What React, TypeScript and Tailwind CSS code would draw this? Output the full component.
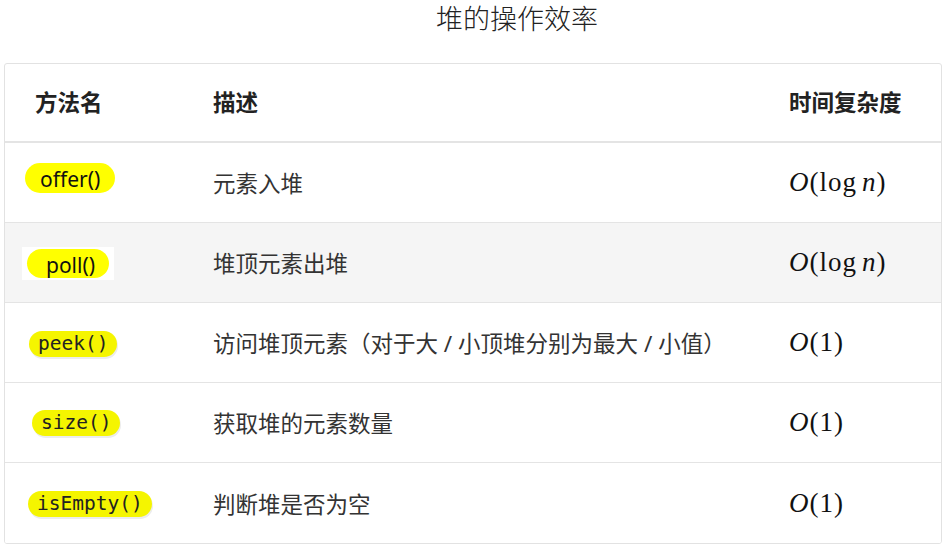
const sans = "font-['Noto_Sans','Noto_Sans_CJK_SC',sans-serif]";
const mono = "font-['DejaVu_Sans_Mono','Noto_Sans_CJK_SC',monospace]";

type Row = {
  name: string;
  kind: 'sans' | 'sans-boxed' | 'mono';
  desc: string;
  cost: 'log' | 'one';
  shift: string;
  striped?: boolean;
};

const rows: Row[] = [
  { name: 'offer()', kind: 'sans', desc: '元素入堆', cost: 'log', shift: 'ml-[0px] mb-[9px]' },
  { name: 'poll()', kind: 'sans-boxed', desc: '堆顶元素出堆', cost: 'log', shift: '-ml-[3px] mt-[2px]', striped: true },
  { name: 'peek()', kind: 'mono', desc: '访问堆顶元素（对于大 / 小顶堆分别为最大 / 小值）', cost: 'one', shift: 'ml-[4px] mt-[2px]' },
  { name: 'size()', kind: 'mono', desc: '获取堆的元素数量', cost: 'one', shift: 'ml-[7px] mt-[1px]' },
  { name: 'isEmpty()', kind: 'mono', desc: '判断堆是否为空', cost: 'one', shift: 'ml-[3px] mt-[1px]' },
];

function Method({ row }: { row: Row }) {
  if (row.kind === 'sans') {
    return (
      <span className={`inline-flex h-[30px] items-center rounded-full bg-[#ffff00] px-[15px] pt-[4px] text-[21px] text-[#111] ${sans}`}>
        {row.name}
      </span>
    );
  }
  if (row.kind === 'sans-boxed') {
    return (
      <span className="inline-flex bg-white px-[5px] py-[2px]">
        <span className={`inline-flex h-[29px] items-center rounded-full bg-[#ffff00] pl-[19px] pr-[14px] pt-[5px] text-[21px] text-[#111] ${sans}`}>
          {row.name}
        </span>
      </span>
    );
  }
  return (
    <span className={`inline-flex h-[26px] items-center rounded-full bg-[#f5f500] px-[9px] text-[19.5px] text-[#222] shadow-[1px_2px_0_#ececec] ${mono}`}>
      {row.name}
    </span>
  );
}

function Cost({ kind }: { kind: 'log' | 'one' }) {
  return (
    <span className="font-['Liberation_Serif',serif] text-[27px] tracking-[1px] text-[#111]">
      <i>O</i>(
      {kind === 'log' ? (
        <>
          log<span className="ml-[5px] italic">n</span>
        </>
      ) : (
        '1'
      )}
      )
    </span>
  );
}

export default function App() {
  return (
    <div className={`min-h-[549px] w-[952px] bg-white ${sans}`}>
      <h2 className="flex h-[38px] items-center justify-center pl-[82px] text-[27px] font-light text-[#222]">
        堆的操作效率
      </h2>
      <div className="ml-[4px] mt-[25px] w-[938px] overflow-hidden rounded-[3px] border border-[#e2e2e2]">
        <div className="grid h-[79px] grid-cols-[178px_1fr_181px] items-center border-b-2 border-[#e4e4e4] text-[22.5px] font-bold text-[#222]">
          <div className="pl-[30px]">方法名</div>
          <div className="pl-[30px]">描述</div>
          <div className="pl-[29px]">时间复杂度</div>
        </div>
        {rows.map((row, i) => (
          <div
            key={row.name}
            className={`grid h-[80px] grid-cols-[178px_1fr_181px] items-center ${i < rows.length - 1 ? 'border-b border-[#e4e4e4]' : ''} ${row.striped ? 'bg-[#f5f5f5]' : 'bg-white'}`}
          >
            <div className="flex pl-[20px]">
              <div className={row.shift}>
                <Method row={row} />
              </div>
            </div>
            <div className="pl-[30px] pt-[3px] text-[22.5px] text-[#333]">{row.desc}</div>
            <div className="pl-[29px]">
              <Cost kind={row.cost} />
            </div>
          </div>
        ))}
      </div>
    </div>
  );
}
